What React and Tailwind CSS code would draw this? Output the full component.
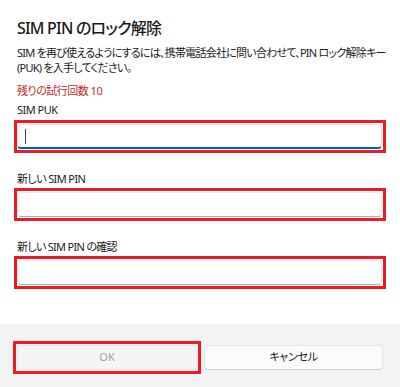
export default function App() {
  return (
    <div className="w-[400px] h-[387px] bg-white flex flex-col text-[#1a1a1a] [font-family:'Noto_Sans','Noto_Sans_CJK_JP',sans-serif] [font-feature-settings:'palt']">
      <div className="flex-1 flex flex-col pl-[17px]">
        <div className="mt-[16px] h-[24px] leading-[24px] text-[16px] font-medium tracking-[-0.8px] whitespace-nowrap">SIM PIN のロック解除</div>
        <div className="mt-[5px] text-[11px] leading-[15px] tracking-[-0.75px] whitespace-nowrap">
          SIM を再び使えるようにするには、携帯電話会社に問い合わせて、PIN ロック解除キー
          <br />
          (PUK) を入手してください。
        </div>
        <div className="mt-[8px] text-[11px] leading-[15px] tracking-[-0.5px] text-[#c42b1c]">残りの試行回数 10</div>
        <div className="mt-[4px] text-[11px] leading-[15px] tracking-[-0.5px]">SIM PUK</div>
        <div className="mt-[3px] -ml-[3px] w-[372px] h-[33px] border-[3px] border-[#ed1c24] py-px pr-px">
          <div className="relative h-[25px] bg-white rounded-[4px] border border-[#e5e5e5] border-b-2 border-b-[#005fb8]">
            <div className="absolute left-[7px] top-[4px] w-px h-[15px] bg-[#444]"></div>
          </div>
        </div>
        <div className="mt-[18px] text-[11px] leading-[15px] tracking-[-0.6px]">新しい SIM PIN</div>
        <div className="mt-[2px] -ml-[3px] w-[372px] h-[33px] border-[3px] border-[#ed1c24] py-px pr-px">
          <div className="h-[25px] bg-[#fdfdfd] rounded-[4px] border border-[#e8e8e8] border-b-[#b0b0b0]"></div>
        </div>
        <div className="mt-[18px] text-[11px] leading-[15px] tracking-[-0.7px]">新しい SIM PIN の確認</div>
        <div className="mt-[2px] -ml-[3px] w-[372px] h-[33px] border-[3px] border-[#ed1c24] py-px pr-px">
          <div className="h-[25px] bg-[#fdfdfd] rounded-[4px] border border-[#e8e8e8] border-b-[#b0b0b0]"></div>
        </div>
      </div>
      <div className="h-[63px] bg-[#f3f3f3] flex items-start pl-[13px] pt-[17px]">
        <div className="w-[188px] h-[33px] border-[3px] border-[#ed1c24] p-px">
          <div className="h-[25px] rounded-[4px] bg-[#f5f5f5] border border-[#e5e5e5] flex items-center justify-center text-[11px] text-[#a0a0a0]">OK</div>
        </div>
        <div className="ml-[3px] mt-[4px] w-[179px] h-[25px] rounded-[4px] bg-[#fbfbfb] border border-[#e5e5e5] border-b-[#d0d0d0] flex items-center justify-center text-[11px] tracking-[-0.3px] text-[#1a1a1a]">キャンセル</div>
      </div>
    </div>
  );
}
